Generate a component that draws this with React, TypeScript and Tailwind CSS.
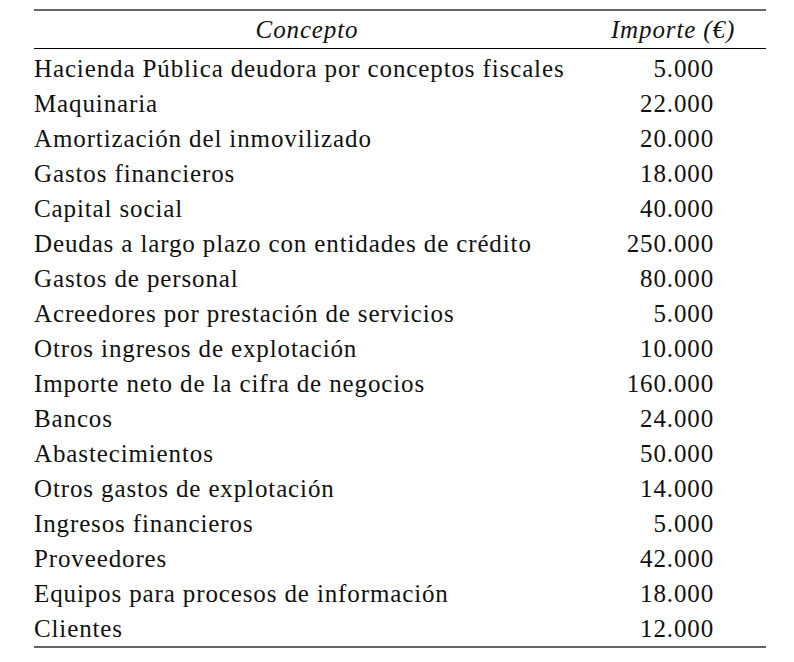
import React from "react";

const rows: [string, string][] = [
  ["Hacienda Pública deudora por conceptos fiscales", "5.000"],
  ["Maquinaria", "22.000"],
  ["Amortización del inmovilizado", "20.000"],
  ["Gastos financieros", "18.000"],
  ["Capital social", "40.000"],
  ["Deudas a largo plazo con entidades de crédito", "250.000"],
  ["Gastos de personal", "80.000"],
  ["Acreedores por prestación de servicios", "5.000"],
  ["Otros ingresos de explotación", "10.000"],
  ["Importe neto de la cifra de negocios", "160.000"],
  ["Bancos", "24.000"],
  ["Abastecimientos", "50.000"],
  ["Otros gastos de explotación", "14.000"],
  ["Ingresos financieros", "5.000"],
  ["Proveedores", "42.000"],
  ["Equipos para procesos de información", "18.000"],
  ["Clientes", "12.000"],
];

export default function App() {
  return (
    <div className="w-[794px] h-[662px] bg-white pt-[9px] pl-[34px] font-['Liberation_Serif',serif] text-[25px] tracking-[0.035em] text-[#111]">
      <div className="w-[732px] border-t-2 border-b-2 border-t-[#666] border-b-[#666]">
        <div className="flex h-[38px] items-center border-b border-black italic whitespace-nowrap">
          <div className="w-[546px] text-center">Concepto</div>
          <div className="w-[186px] text-center">Importe (€)</div>
        </div>
        <div className="pt-[2px]">
          {rows.map(([name, value]) => (
            <div key={name} className="flex h-[35px] items-center whitespace-nowrap">
              <div className="w-[546px]">{name}</div>
              <div className="w-[134px] text-right">{value}</div>
            </div>
          ))}
        </div>
      </div>
    </div>
  );
}
